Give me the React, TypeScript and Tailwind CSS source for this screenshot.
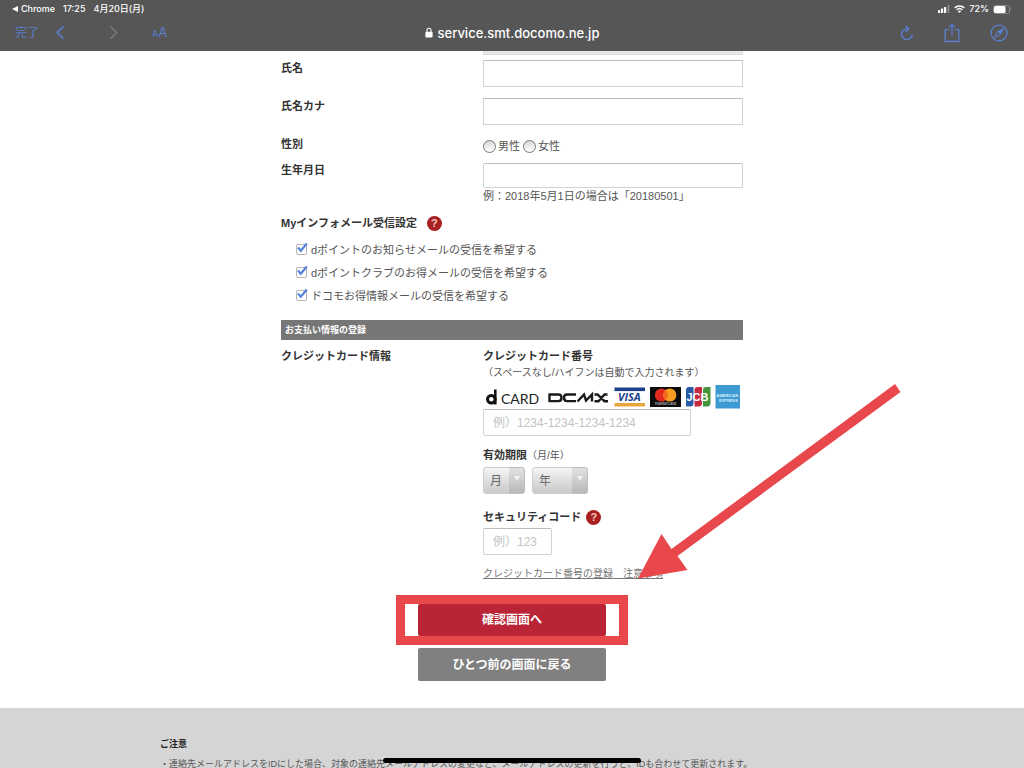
import type { ReactNode } from 'react';

const mailOptions = [
  { id: 'mail-point', label: 'dポイントのお知らせメールの受信を希望する' },
  { id: 'mail-club', label: 'dポイントクラブのお得メールの受信を希望する' },
  { id: 'mail-docomo', label: 'ドコモお得情報メールの受信を希望する' },
];

const fieldClass =
  'block border border-[#d2d2d2] border-t-[#bdbdbd] bg-white px-[9px] text-xs text-gray-700 placeholder:text-[#c4c4c4] focus:outline-none';

function StatusBar() {
  return (
    <div className="flex h-[18px] items-center justify-between pl-3 pr-3 text-[9px] font-medium text-white">
      <div className="flex items-center gap-2">
        <a href="#chrome" className="flex items-center gap-[3px]">
          <svg viewBox="0 0 6 6" className="size-[6px]" fill="currentColor" aria-hidden="true">
            <path d="M6 0v6L0 3z" />
          </svg>
          Chrome
        </a>
        <span>17:25</span>
        <span>4月20日(月)</span>
      </div>
      <div className="flex items-center gap-1">
        <svg viewBox="0 0 12 8" className="h-2 w-3" fill="currentColor" aria-hidden="true">
          <rect x="0" y="5" width="2.2" height="3" rx=".5" />
          <rect x="3" y="3.6" width="2.2" height="4.4" rx=".5" />
          <rect x="6" y="2" width="2.2" height="6" rx=".5" />
          <rect x="9.4" y="0" width="2" height="8" rx=".5" opacity=".3" />
        </svg>
        <svg viewBox="0 0 20 15" className="h-2 w-[11px]" fill="none" stroke="currentColor" strokeWidth="2.7" aria-hidden="true">
          <path d="M1 5.4a13 13 0 0 1 18 0M4.6 9.2a8 8 0 0 1 10.8 0" />
          <path d="M10 15l-3-3.2a4.4 4.4 0 0 1 6 0z" fill="currentColor" stroke="none" />
        </svg>
        <span>72%</span>
        <svg viewBox="0 0 19 9" className="h-[9px] w-[19px]" aria-hidden="true">
          <rect x=".5" y=".5" width="16" height="8" rx="2.2" fill="none" stroke="#8b8b8b" />
          <rect x="1" y="1" width="11.5" height="7" rx="1.6" fill="#fff" />
          <path d="M17.6 3v3c1-.4 1-2.6 0-3z" fill="#8b8b8b" />
        </svg>
      </div>
    </div>
  );
}

function BrowserBar() {
  return (
    <header className="relative z-10 h-[51px] shrink-0 bg-[#565656] font-['Inter','Noto_Sans_CJK_JP',sans-serif]">
      <StatusBar />
      <div className="grid h-[29px] grid-cols-3 items-center px-[15px] text-[#5b7fd0]">
        <div className="flex items-center">
          <button type="button" className="text-xs">完了</button>
          <button type="button" aria-label="戻る" className="ml-4">
            <svg viewBox="0 0 10 16" className="h-[15px] w-[10px]" fill="none" stroke="currentColor" strokeWidth="1.7" aria-hidden="true">
              <path d="M8.7 1.5 2 8l6.7 6.5" />
            </svg>
          </button>
          <button type="button" aria-label="進む" className="ml-11 text-[#7c7c7c]" disabled>
            <svg viewBox="0 0 10 16" className="h-[15px] w-[10px]" fill="none" stroke="currentColor" strokeWidth="1.5" aria-hidden="true">
              <path d="M1.3 1.5 8 8l-6.7 6.5" />
            </svg>
          </button>
          <button type="button" className="ml-[33px] text-[13px]">
            <span className="text-[9px]">A</span>A
          </button>
        </div>
        <div className="flex items-center justify-center gap-[5px] text-[13px] font-medium text-white">
          <svg viewBox="0 0 8 11" className="h-[11px] w-2" aria-hidden="true">
            <rect x=".4" y="4.7" width="7.2" height="5.8" rx="1" fill="#fff" />
            <path d="M2 5V3.2a2 2 0 0 1 4 0V5" fill="none" stroke="#fff" strokeWidth="1.1" />
          </svg>
          service.smt.docomo.ne.jp
        </div>
        <div className="flex items-center justify-end gap-[30px] pr-px">
          <button type="button" aria-label="再読み込み">
            <svg viewBox="0 0 14 16" className="h-4 w-[14px]" fill="none" stroke="currentColor" strokeWidth="1.4" aria-hidden="true">
              <path d="M8.3 3.900H6.900A5.300 5.300 0 1 0 12.200 9.200" />
              <path d="M5.500.8 8.600 3.900 5.500 7" />
            </svg>
          </button>
          <button type="button" aria-label="共有">
            <svg viewBox="0 0 16 20" className="h-5 w-4" fill="none" stroke="currentColor" strokeWidth="1.3" aria-hidden="true">
              <path d="M5 6.7H1.2V18.500h13.600V6.700H11M8 12.500V1.500M4.900 4.500 8 1.400l3.100 3.100" />
            </svg>
          </button>
          <button type="button" aria-label="Safariで開く">
            <svg viewBox="0 0 18 18" className="size-[18px]" fill="none" stroke="currentColor" strokeWidth="1.3" aria-hidden="true">
              <circle cx="9" cy="9" r="7.9" />
              <path d="M13.600 4.400 7.500 7.500l3 3z" fill="currentColor" stroke="none" />
              <path d="M13.600 4.400 7.500 7.500 4.600 13.400l5.900-2.900z" strokeWidth="1" />
            </svg>
          </button>
        </div>
      </div>
    </header>
  );
}

function HelpButton({ label }: { label: string }) {
  return (
    <button
      type="button"
      aria-label={label}
      className="flex size-[15px] items-center justify-center rounded-full bg-[#a8201f] text-[11px] leading-none font-bold text-[#f0c8c0]"
    >
      ?
    </button>
  );
}

function FormRow({ label, className, children }: { label: ReactNode; className: string; children: ReactNode }) {
  return (
    <div className={`grid grid-cols-[202px_1fr] items-start ${className}`}>
      <div className="font-bold text-[#333]">{label}</div>
      {children}
    </div>
  );
}

function CardBrands() {
  return (
    <svg viewBox="0 0 257 24" className="h-6 w-[257px]" role="img" aria-label="利用できるカード">
      <g fill="none" stroke="#111">
        <circle cx="8.3" cy="14.2" r="3.8" strokeWidth="3" />
        <path d="M12.3 4.500V19.500" strokeWidth="2.6" />
      </g>
      <text x="18" y="19" fontSize="14" fill="#222" fontFamily="Lato, sans-serif">CARD</text>
      <g fill="none" stroke="#1a1a1a" strokeWidth="2.4">
        <path d="M65.500 9.500h10q3 0 3 3.300t-3 3.300h-9V9" />
        <path d="M93 9.500h-9q-3 0-3 3.300t3 3.300h9" />
        <path d="M94.500 16.500 101 9.500l2 6 6-6v7" />
        <path d="M111.500 9.500h3l7 6.700h3.500M124.500 9.500h-3l-6 6.700h-4" />
      </g>
      <rect x="131.500" y="2.500" width="30.500" height="19" fill="#fff" />
      <path d="M131.500 2.500H162v3.600h-30.500z" fill="#1c3f8c" />
      <path d="M131.500 18H162v3.500h-30.500z" fill="#e6a63c" />
      <text x="135" y="16" fontSize="11" fontWeight="700" fontStyle="italic" fill="#1c3f8c" fontFamily="Open Sans, sans-serif">VISA</text>
      <rect x="167" y="2" width="31" height="20" fill="#0c0c0c" />
      <circle cx="178.500" cy="10" r="6.6" fill="#e32a1e" />
      <circle cx="186.800" cy="10" r="6.6" fill="#f59e1f" />
      <path d="M182.650 4.900a6.600 6.600 0 0 1 0 10.200 6.600 6.600 0 0 1 0-10.200" fill="#f36a1f" />
      <text x="182.600" y="20" fontSize="4" textAnchor="middle" fill="#ddd" fontFamily="Inter, sans-serif">mastercard</text>
      <path d="M206 2h4.500v16q0 3.500-3.500 3.500h-4V5q0-3 3-3" fill="#285ba8" />
      <path d="M214.500 2h4.500v16q0 3.500-3.500 3.500h-4V5q0-3 3-3" fill="#c52b40" />
      <path d="M223 2h4.500v16q0 3.500-3.500 3.500h-4V5q0-3 3-3" fill="#43963e" />
      <text x="203.500" y="16" fontSize="11" fontWeight="700" fill="#fff" fontFamily="Liberation Sans, sans-serif">JCB</text>
      <rect x="232.500" y="0" width="24.500" height="23.500" fill="#3e9ad2" />
      <g fontSize="4" fontWeight="700" fill="#d9eefb" fontFamily="Liberation Sans, sans-serif">
        <text x="233.500" y="12">AMERICAN</text>
        <text x="236" y="16.500">EXPRESS</text>
      </g>
    </svg>
  );
}

function PulldownSelect({ id, label, text, className }: { id: string; label: string; text: string; className: string }) {
  return (
    <div className={`relative h-[27px] ${className}`}>
      <select
        id={id}
        aria-label={label}
        className="h-full w-full appearance-none rounded-[3px] border border-[#cfcfcf] bg-linear-to-b from-[#f5f5f5] to-[#c9c9c9] pl-[6px] text-xs text-[#666]"
      >
        <option>{text}</option>
      </select>
      <span className="pointer-events-none absolute inset-y-0 right-0 flex w-4 items-center justify-center rounded-r-[3px] bg-black/8 pb-1">
        <svg viewBox="0 0 6 5" className="h-[5px] w-[6px]" fill="#f3f3f3" aria-hidden="true">
          <path d="M0 0h6L3 5z" />
        </svg>
      </span>
    </div>
  );
}

function CreditCardFields() {
  return (
    <div>
      <label htmlFor="card-number" className="block font-bold text-[#333]">クレジットカード番号</label>
      <p className="mt-px text-[10px]">（スペースなし/ハイフンは自動で入力されます）</p>
      <div className="mt-1">
        <CardBrands />
      </div>
      <input id="card-number" type="text" placeholder="例）1234-1234-1234-1234" className={`${fieldClass} h-[27px] w-[208px] rounded-[2px]`} />

      <div className="mt-[11px]">
        <span className="font-bold text-[#333]">有効期限</span>
        <span className="text-[10px]">（月/年）</span>
      </div>
      <div className="mt-[3px] flex gap-[7px]">
        <PulldownSelect id="exp-month" label="有効期限の月" text="月" className="w-[42px]" />
        <PulldownSelect id="exp-year" label="有効期限の年" text="年" className="w-[56px]" />
      </div>

      <div className="mt-[15px] flex items-center gap-[5px]">
        <label htmlFor="security-code" className="font-bold text-[#333]">セキュリティコード</label>
        <HelpButton label="セキュリティコードについて" />
      </div>
      <input id="security-code" type="text" placeholder="例）123" className={`${fieldClass} mt-[3px] h-[27px] w-[69px] rounded-[2px]`} />
      <a href="#card-notes" className="mt-[11px] block text-[10px] text-[#777] underline">
        クレジットカード番号の登録　注意事項
      </a>
    </div>
  );
}

export default function App() {
  return (
    <div className="relative flex h-screen flex-col overflow-hidden bg-white font-['Liberation_Sans','Noto_Sans_CJK_JP',sans-serif] text-[11px] leading-4 text-[#555]">
      <BrowserBar />

      <main className="relative mx-auto w-[462px] shrink-0 pb-[27px]">
        <form onSubmit={(e) => e.preventDefault()}>
          <div className="mb-[5px] ml-[202px] h-1 border-x border-b border-[#dcdcdc] bg-[#e6e6e6]" />

          <FormRow className="h-[38px]" label={<label htmlFor="name">氏名</label>}>
            <input id="name" type="text" className={`${fieldClass} h-[27px] w-full`} />
          </FormRow>
          <FormRow className="h-[38px]" label={<label htmlFor="kana">氏名カナ</label>}>
            <input id="kana" type="text" className={`${fieldClass} h-[27px] w-full`} />
          </FormRow>
          <FormRow className="h-[26px]" label="性別">
            <div className="flex gap-[3px] pt-[2px]">
              {['男性', '女性'].map((gender) => (
                <label key={gender} className="flex items-center gap-[2px]">
                  <input
                    type="radio"
                    name="gender"
                    className="size-[13px] appearance-none rounded-full border border-[#777] bg-linear-to-b from-[#d8d8d8] to-white"
                  />
                  {gender}
                </label>
              ))}
            </div>
          </FormRow>
          <FormRow className="pb-[11px]" label={<label htmlFor="birthday">生年月日</label>}>
            <div className="pt-px">
              <input id="birthday" type="text" className={`${fieldClass} h-[25px] w-full rounded-[2px]`} />
              <p>例：2018年5月1日の場合は「20180501」</p>
            </div>
          </FormRow>

          <div className="flex items-center gap-[10px] font-bold text-[#333]">
            Myインフォメール受信設定
            <HelpButton label="Myインフォメールについて" />
          </div>
          <ul className="mt-[7px] ml-[15px]">
            {mailOptions.map((option) => (
              <li key={option.id} className="flex h-[23px] items-center gap-1">
                <span className="relative flex">
                  <input
                    id={option.id}
                    type="checkbox"
                    defaultChecked
                    className="peer size-[11px] appearance-none rounded-[2px] border border-[#b4b4b4] bg-white"
                  />
                  <svg
                    viewBox="0 0 12 12"
                    className="pointer-events-none absolute -top-0.5 left-0 hidden size-3 peer-checked:block"
                    fill="none"
                    stroke="#5583dd"
                    strokeWidth="2.2"
                    aria-hidden="true"
                  >
                    <path d="M2 5.500 4.800 8.800 10.800 1.500" />
                  </svg>
                </span>
                <label htmlFor={option.id}>{option.label}</label>
              </li>
            ))}
          </ul>

          <h2 className="mt-[13px] mb-2 bg-[#777] px-1 py-[2px] text-[9px] font-bold text-white">お支払い情報の登録</h2>

          <FormRow className="pb-[13px]" label="クレジットカード情報">
            <CreditCardFields />
          </FormRow>

          <div className="flex flex-col items-center gap-[3px]">
            <div className="flex w-[232px] justify-center border-9 border-[#e8474c]">
              <button type="submit" className="h-8 w-[188px] rounded-[2px] bg-[#b92537] text-xs font-bold text-white">
                確認画面へ
              </button>
            </div>
            <button type="button" className="h-[33px] w-[188px] rounded-[2px] bg-[#808080] text-xs font-bold text-white">
              ひとつ前の画面に戻る
            </button>
          </div>
        </form>

        {/* 確認ボタンを指す矢印 */}
        <svg
          viewBox="0 0 264 198"
          className="pointer-events-none absolute top-[332px] left-[356px] h-[198px] w-[264px]"
          fill="#e8474c"
          aria-hidden="true"
        >
          <path d="M1 195.500 24.500 151l10 15L258 1l5.500 8L40.500 173l10 14z" />
        </svg>
      </main>

      <footer className="min-h-0 flex-1 bg-[#d5d5d5] pt-7">
        <div className="mx-auto w-[704px] text-[9px]">
          <h3 className="font-bold text-[#222]">ご注意</h3>
          <p className="mt-1 whitespace-nowrap">
            ・連絡先メールアドレスをIDにした場合、対象の連絡先メールアドレスの変更など、メールアドレスの更新を行うと、IDも合わせて更新されます。
          </p>
        </div>
      </footer>

      <div className="absolute bottom-[5px] left-1/2 h-[5px] w-[258px] -translate-x-1/2 rounded-full bg-black" />
    </div>
  );
}
